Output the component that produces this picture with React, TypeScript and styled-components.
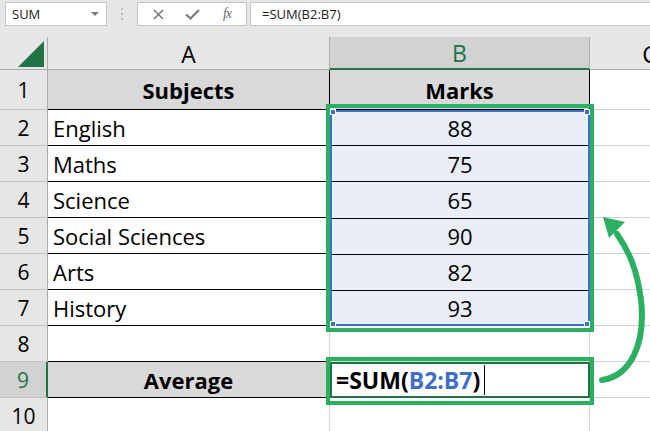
import React from 'react';
import styled, { createGlobalStyle } from 'styled-components';

const GREEN = '#2bb062';
const XL_GREEN = '#217346';
const REF_BLUE = '#3f6fc6';
const GRID = '#d4d4d4';
const HEAD_LINE = '#ababab';

const GlobalStyle = createGlobalStyle`
  html, body { margin: 0; padding: 0; }
  body {
    width: 650px;
    height: 431px;
    overflow: hidden;
    background: #fff;
    font-family: "Open Sans", "Noto Sans", sans-serif;
  }
`;

const FormulaBar = styled.div`
  display: flex;
  align-items: flex-start;
  height: 37px;
  box-sizing: border-box;
  padding: 2px 0 0 5px;
  background: #e6e6e6;
`;

const NameBox = styled.div`
  width: 102px;
  height: 24px;
  box-sizing: border-box;
  background: #fff;
  border: 1px solid #c6c6c6;
  display: flex;
  align-items: center;
  justify-content: space-between;
  padding: 0 7px 0 6px;
  font-size: 13px;
  color: #222;
`;

const DropArrow = styled.span`
  width: 0;
  height: 0;
  border-left: 4px solid transparent;
  border-right: 4px solid transparent;
  border-top: 4px solid #7a7a7a;
`;

const Grip = styled.div`
  width: 30px;
  height: 24px;
  display: flex;
  flex-direction: column;
  align-items: center;
  justify-content: center;
  gap: 3px;

  span {
    width: 2px;
    height: 2px;
    background: #b8b8b8;
  }
`;

const FnBox = styled.div`
  width: 110px;
  height: 24px;
  box-sizing: border-box;
  background: #fff;
  border: 1px solid #c6c6c6;
  display: flex;
  align-items: center;
  padding-left: 3px;
`;

const FnButton = styled.span<{ $w: number }>`
  width: ${p => p.$w}px;
  display: flex;
  justify-content: center;
  align-items: center;
  color: #7a7a7a;
`;

const FxLabel = styled.span`
  font-family: "Liberation Serif", serif;
  font-style: italic;
  font-size: 14px;
  color: #6a6a6a;
  letter-spacing: -1px;
`;

const FormulaInput = styled.div`
  flex: 1;
  margin-left: 3px;
  height: 24px;
  box-sizing: border-box;
  background: #fff;
  border: 1px solid #c6c6c6;
  border-right: none;
  padding-left: 11px;
  font-size: 13px;
  line-height: 22px;
  color: #222;
`;

const Sheet = styled.div`
  position: relative;
  display: grid;
  grid-template-columns: 48px 282px 260px 120px;
  grid-template-rows: 33px 40px repeat(9, 36px);
`;

const Corner = styled.div`
  background: #e6e6e6;
  border-right: 1px solid ${HEAD_LINE};
  border-bottom: 1px solid ${HEAD_LINE};
  box-sizing: border-box;
  display: flex;
  align-items: flex-end;
  justify-content: flex-end;
  padding: 0 3px 2px 0;
`;

const ColHead = styled.div<{ $active?: boolean }>`
  box-sizing: border-box;
  background: ${p => (p.$active ? '#d2d2d2' : '#e6e6e6')};
  color: ${p => (p.$active ? XL_GREEN : '#000')};
  border-right: 1px solid ${HEAD_LINE};
  border-bottom: ${p => (p.$active ? `2px solid ${XL_GREEN}` : `1px solid ${HEAD_LINE}`)};
  display: flex;
  align-items: center;
  justify-content: center;
  font-size: 23px;
  padding-top: 1px;
`;

const RowHead = styled.div<{ $active?: boolean }>`
  box-sizing: border-box;
  background: ${p => (p.$active ? '#d2d2d2' : '#e6e6e6')};
  color: ${p => (p.$active ? XL_GREEN : '#000')};
  border-right: ${p => (p.$active ? `2px solid ${XL_GREEN}` : `1px solid ${HEAD_LINE}`)};
  border-bottom: 1px solid #c4c4c4;
  display: flex;
  align-items: center;
  justify-content: center;
  font-size: 21px;
`;

const Cell = styled.div<{ $bg?: string; $right?: string; $bottom?: string; $center?: boolean; $bold?: boolean }>`
  box-sizing: border-box;
  background: ${p => p.$bg ?? '#fff'};
  border-right: 1px solid ${p => p.$right ?? GRID};
  border-bottom: 1px solid ${p => p.$bottom ?? GRID};
  display: flex;
  align-items: center;
  justify-content: ${p => (p.$center ? 'center' : 'flex-start')};
  padding: 0 5px;
  font-size: 22px;
  font-weight: ${p => (p.$bold ? 700 : 400)};
  color: #000;
  white-space: nowrap;
  overflow: hidden;
`;

const RefRange = styled.div`
  grid-row: span 6;
  position: relative;
  z-index: 1;
  display: flex;
  flex-direction: column;
  background: #e9eef8;
  box-shadow: inset 0 0 0 2px ${REF_BLUE};

  &::after {
    content: '';
    position: absolute;
    top: -6px;
    bottom: -6px;
    left: -4px;
    right: -4px;
    border: 4px solid ${GREEN};
  }
`;

const RangeCell = styled.div`
  flex: 1;
  box-sizing: border-box;
  display: flex;
  align-items: center;
  justify-content: center;
  font-size: 22px;
  color: #000;

  & + & {
    border-top: 1px solid #000;
    margin: 0 2px;
  }
`;

const Handle = styled.span<{ $top?: boolean; $left?: boolean }>`
  position: absolute;
  ${p => (p.$top ? 'top: -1px;' : 'bottom: -1px;')}
  ${p => (p.$left ? 'left: 0;' : 'right: 0;')}
  width: 4px;
  height: 4px;
  background: ${REF_BLUE};
  border: 1px solid #fff;
`;

const ActiveCell = styled.div`
  position: relative;
  z-index: 1;
  box-sizing: border-box;
  box-shadow: inset 0 0 0 2px ${XL_GREEN};
  display: flex;
  align-items: center;
  padding-left: 6px;
  font-size: 23px;
  font-weight: 700;
  color: #000;

  &::after {
    content: '';
    position: absolute;
    top: -5px;
    bottom: -7px;
    left: -4px;
    right: -4px;
    border: 4px solid ${GREEN};
  }
`;

const RefText = styled.span`
  color: ${REF_BLUE};
`;

const Caret = styled.span`
  width: 1px;
  height: 30px;
  background: #000;
  margin-left: 4px;
`;

const Arrow = styled.svg`
  position: absolute;
  left: 595px;
  top: 170px;
  pointer-events: none;
  z-index: 2;
`;

const subjects = [
  ['English', 88],
  ['Maths', 75],
  ['Science', 65],
  ['Social Sciences', 90],
  ['Arts', 82],
  ['History', 93],
] as const;

const App: React.FC = () => {
  return (
    <>
      <GlobalStyle />
      <FormulaBar>
        <NameBox>
          SUM
          <DropArrow />
        </NameBox>
        <Grip>
          <span />
          <span />
          <span />
        </Grip>
        <FnBox>
          <FnButton $w={34}>
            <svg width="11" height="11" viewBox="0 0 11 11">
              <path d="M1 1 L10 10 M10 1 L1 10" stroke="#7a7a7a" strokeWidth="1.6" fill="none" />
            </svg>
          </FnButton>
          <FnButton $w={34}>
            <svg width="15" height="11" viewBox="0 0 15 11">
              <path d="M1 5.5 L5.5 9.5 L14 1" stroke="#7a7a7a" strokeWidth="2.2" fill="none" />
            </svg>
          </FnButton>
          <FnButton $w={36}>
            <FxLabel>fx</FxLabel>
          </FnButton>
        </FnBox>
        <FormulaInput>=SUM(B2:B7)</FormulaInput>
      </FormulaBar>

      <Sheet>
        <Corner>
          <svg width="26" height="26" viewBox="0 0 26 26">
            <polygon points="0,26 26,26 26,0" fill={XL_GREEN} />
          </svg>
        </Corner>
        <ColHead>A</ColHead>
        <ColHead $active>B</ColHead>
        <ColHead>C</ColHead>

        <RowHead>1</RowHead>
        <Cell $bg="#d9d9d9" $right="#000" $bottom="#000" $center $bold>Subjects</Cell>
        <Cell $bg="#d9d9d9" $right="#000" $bottom="#000" $center $bold>Marks</Cell>
        <Cell />

        {subjects.map(([name], i) => (
          <React.Fragment key={name}>
            <RowHead>{i + 2}</RowHead>
            <Cell $right="#000" $bottom="#000">{name}</Cell>
            {i === 0 && (
              <RefRange>
                {subjects.map(([n, mark]) => (
                  <RangeCell key={n}>{mark}</RangeCell>
                ))}
                <Handle $top $left />
                <Handle $top />
                <Handle $left />
                <Handle />
              </RefRange>
            )}
            <Cell />
          </React.Fragment>
        ))}

        <RowHead>8</RowHead>
        <Cell $bottom="#000" />
        <Cell />
        <Cell />

        <RowHead $active>9</RowHead>
        <Cell $bg="#d9d9d9" $right="#000" $bottom="#000" $center $bold>Average</Cell>
        <ActiveCell>
          =SUM(<RefText>B2:B7</RefText>)<Caret />
        </ActiveCell>
        <Cell />

        <RowHead>10</RowHead>
        <Cell />
        <Cell />
        <Cell />

        <Arrow width="55" height="190" viewBox="0 0 55 190">
          <path
            d="M7 173 C35 169, 51 138, 46 93 C42 61, 33 43, 22 27"
            stroke={GREEN}
            strokeWidth="6"
            strokeLinecap="round"
            fill="none"
          />
          <polygon points="8,10 30,15 14,31" fill={GREEN} />
        </Arrow>
      </Sheet>
    </>
  );
};

export default App;
